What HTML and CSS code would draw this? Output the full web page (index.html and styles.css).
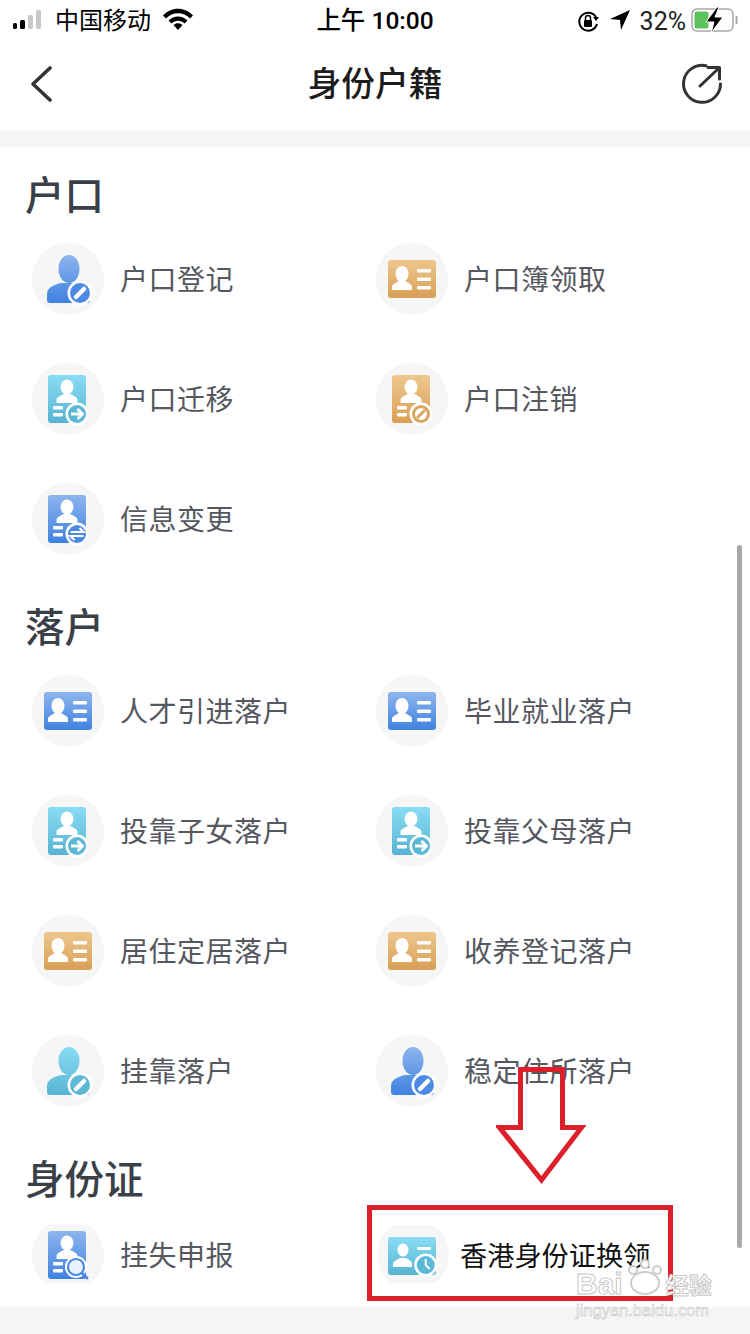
FILE: index.html
```html
<!DOCTYPE html>
<html lang="zh-CN">
<head>
    <meta charset="UTF-8">
    <meta name="viewport" content="width=device-width, initial-scale=1.0">
    <title>身份户籍</title>
    <link rel="stylesheet" href="styles.css">
</head>
<body>
    <svg class="defs" aria-hidden="true">
        <defs>
            <linearGradient id="blue" x1="0" y1="0" x2="0" y2="1"><stop offset="0" stop-color="#8db5ee"/><stop offset="1" stop-color="#3f82e0"/></linearGradient>
            <linearGradient id="teal" x1="0" y1="0" x2="0" y2="1"><stop offset="0" stop-color="#8adcf4"/><stop offset="1" stop-color="#56b4d2"/></linearGradient>
            <linearGradient id="gold" x1="0" y1="0" x2="0" y2="1"><stop offset="0" stop-color="#eec78f"/><stop offset="1" stop-color="#d9a055"/></linearGradient>

            <path id="person" d="M26.500 26a10.500 14 0 1 1 21 0 10.500 14 0 1 1-21 0zM15 57v-6c0-6 6-9 14-11h16c8 2 13 5 13 11v6a3 3 0 0 1-3 3H18a3 3 0 0 1-3-3z"/>
            <g id="doc">
                <rect x="16" y="12" width="38" height="48" rx="3"/>
                <ellipse cx="35" cy="24" rx="6.500" ry="7.500" fill="#fff"/>
                <path fill="#fff" d="M24.500 40v-3c0-3 4-4 7-6h7c3 2 7 3 7 6v3z"/>
                <rect x="21" y="43" width="10" height="3.500" rx="1" fill="#fff"/>
                <rect x="21" y="50" width="10" height="3.500" rx="1" fill="#fff"/>
            </g>
            <g id="card">
                <rect x="12" y="17" width="48" height="38" rx="3"/>
                <ellipse cx="26" cy="31" rx="6.500" ry="8" fill="#fff"/>
                <path fill="#fff" d="M16 47v-3c0-3 4-4 7-6h6c3 2 7 3 7 6v3z"/>
                <rect x="41" y="26" width="14" height="3.500" rx="1" fill="#fff"/>
                <rect x="41" y="34.500" width="14" height="3.500" rx="1" fill="#fff"/>
                <rect x="41" y="43" width="14" height="3.500" rx="1" fill="#fff"/>
            </g>
            <g id="pen">
                <circle cx="48" cy="50" r="12.500" fill="#fff"/>
                <circle cx="48" cy="50" r="10" fill="currentColor"/>
                <path d="M44 54l8-8" stroke="#fff" stroke-width="4.500" stroke-linecap="round" fill="none"/>
            </g>
            <g id="go">
                <circle cx="45" cy="51" r="11.500" fill="#fff"/>
                <circle cx="45" cy="51" r="9" fill="currentColor"/>
                <path d="M39 51h11M45.500 46l5 5-5 5" stroke="#fff" stroke-width="2.800" fill="none"/>
            </g>
            <g id="swap">
                <circle cx="45" cy="51" r="11.500" fill="#fff"/>
                <circle cx="45" cy="51" r="9" fill="currentColor"/>
                <path d="M38.500 49h13l-4-4M51.500 53h-13l4 4" stroke="#fff" stroke-width="2.200" fill="none"/>
            </g>
            <g id="ban">
                <circle cx="45" cy="51" r="11.500" fill="#fff"/>
                <circle cx="45" cy="51" r="9" fill="currentColor"/>
                <circle cx="45" cy="51" r="6" fill="#fff"/>
                <path d="M41 55l8-8" stroke="currentColor" stroke-width="3"/>
            </g>
            <g id="find">
                <circle cx="44" cy="48" r="11" fill="#fff"/>
                <circle cx="44" cy="48" r="8" fill="#eaf3fd" stroke="currentColor" stroke-width="2.200"/>
                <path d="M50 54l5 5" stroke="currentColor" stroke-width="3" stroke-linecap="round"/>
            </g>
            <g id="clock">
                <circle cx="48.700" cy="46" r="11.500" fill="#fff"/>
                <circle cx="48.700" cy="46" r="9" fill="currentColor"/>
                <path d="M48.700 40v6l4 4" stroke="#fff" stroke-width="2" fill="none"/>
            </g>
        </defs>
    </svg>

    <div class="statusbar">
        <div class="status-left">
            <svg class="signal" width="32" height="22" viewBox="0 0 32 22">
                <rect x="1" y="14" width="4" height="6" rx="1.500" fill="#000"/>
                <rect x="8" y="11" width="5" height="9" rx="1.500" fill="#000"/>
                <rect x="16" y="6" width="5" height="14" rx="1.500" fill="#c8c8c8"/>
                <rect x="24" y="1" width="5" height="19" rx="1.500" fill="#c8c8c8"/>
            </svg>
            <span class="carrier">中国移动</span>
            <svg class="wifi" width="32" height="24" viewBox="0 0 32 24">
                <path d="M1 8.500C9-.5 23-.5 31 8.500l-3 3C21.500 4.500 10.500 4.500 4 11.500z" fill="#000"/>
                <path d="M6.500 13.500c5.500-5.500 13.500-5.500 19 0l-3 3c-4-3.800-9-3.800-13 0z" fill="#000"/>
                <path d="M11.500 18c2.500-2.200 6.500-2.200 9 0L16 23z" fill="#000"/>
            </svg>
        </div>
        <div class="status-time">上午 10:00</div>
        <div class="status-right">
            <svg class="lock" width="24" height="24" viewBox="0 0 24 24">
                <path d="M20 8a9 9 0 1 0 1 7" stroke="#000" stroke-width="2" fill="none"/>
                <path d="M17 8h6l-3 4z" fill="#000"/>
                <rect x="8" y="11" width="8" height="7" rx="1" fill="#000"/>
                <path d="M9.500 11V9a2.500 2.500 0 0 1 5 0v2" stroke="#000" stroke-width="1.500" fill="none"/>
            </svg>
            <svg class="locate" width="22" height="22" viewBox="0 0 22 22"><path d="M21 1L1 10l10 1 1 10z" fill="#000"/></svg>
            <span class="percent">32%</span>
            <svg class="battery" width="48" height="26" viewBox="0 0 48 26">
                <rect x="2" y="2" width="41" height="22" rx="5" fill="none" stroke="#a8a8a8" stroke-width="1.500"/>
                <rect x="4.500" y="4.500" width="14" height="17" rx="2.500" fill="#5cc25e"/>
                <path d="M46.500 9v8" stroke="#a8a8a8" stroke-width="2"/>
                <path d="M27 0L16 15h8l-3 11 12-16h-8l4-10z" fill="#000" stroke="#fff" stroke-width="1"/>
            </svg>
        </div>
    </div>

    <div class="navbar">
        <div class="nav-side">
            <svg width="30" height="40" viewBox="0 0 30 40">
                <path d="M24 4L7 20l17 16" stroke="#333" stroke-width="3.600" stroke-linecap="round" stroke-linejoin="round" fill="none"/>
            </svg>
        </div>
        <h1 class="nav-title">身份户籍</h1>
        <div class="nav-side nav-side-right">
            <svg width="44" height="44" viewBox="0 0 44 44">
                <path d="M26 3.800A18.500 18.500 0 1 0 40.500 22" stroke="#333" stroke-width="3" fill="none" stroke-linecap="round"/>
                <path d="M20 24L39 6M28 5.500h11.500V17" stroke="#333" stroke-width="3" fill="none" stroke-linecap="round" stroke-linejoin="round"/>
            </svg>
        </div>
    </div>

    <div class="band"></div>

    <section class="group">
        <h2 class="group-title">户口</h2>
        <div class="grid">
            <div class="item"><svg class="ico c-blue" viewBox="0 0 72 72"><use href="#person" fill="url(#blue)"/><use href="#pen"/></svg><span>户口登记</span></div>
            <div class="item"><svg class="ico" viewBox="0 0 72 72"><use href="#card" fill="url(#gold)"/></svg><span>户口簿领取</span></div>
            <div class="item"><svg class="ico c-teal" viewBox="0 0 72 72"><use href="#doc" fill="url(#teal)"/><use href="#go"/></svg><span>户口迁移</span></div>
            <div class="item"><svg class="ico c-gold" viewBox="0 0 72 72"><use href="#doc" fill="url(#gold)"/><use href="#ban"/></svg><span>户口注销</span></div>
            <div class="item"><svg class="ico c-blue" viewBox="0 0 72 72"><use href="#doc" fill="url(#blue)"/><use href="#swap"/></svg><span>信息变更</span></div>
        </div>
    </section>

    <section class="group">
        <h2 class="group-title">落户</h2>
        <div class="grid">
            <div class="item"><svg class="ico" viewBox="0 0 72 72"><use href="#card" fill="url(#blue)"/></svg><span>人才引进落户</span></div>
            <div class="item"><svg class="ico" viewBox="0 0 72 72"><use href="#card" fill="url(#blue)"/></svg><span>毕业就业落户</span></div>
            <div class="item"><svg class="ico c-teal" viewBox="0 0 72 72"><use href="#doc" fill="url(#teal)"/><use href="#go"/></svg><span>投靠子女落户</span></div>
            <div class="item"><svg class="ico c-teal" viewBox="0 0 72 72"><use href="#doc" fill="url(#teal)"/><use href="#go"/></svg><span>投靠父母落户</span></div>
            <div class="item"><svg class="ico" viewBox="0 0 72 72"><use href="#card" fill="url(#gold)"/></svg><span>居住定居落户</span></div>
            <div class="item"><svg class="ico" viewBox="0 0 72 72"><use href="#card" fill="url(#gold)"/></svg><span>收养登记落户</span></div>
            <div class="item"><svg class="ico c-teal" viewBox="0 0 72 72"><use href="#person" fill="url(#teal)"/><use href="#pen"/></svg><span>挂靠落户</span></div>
            <div class="item"><svg class="ico c-blue" viewBox="0 0 72 72"><use href="#person" fill="url(#blue)"/><use href="#pen"/></svg><span>稳定住所落户</span></div>
        </div>
    </section>

    <section class="group">
        <h2 class="group-title">身份证</h2>
        <div class="grid grid-short">
            <div class="item"><svg class="ico c-blue" viewBox="0 0 72 72"><use href="#doc" fill="url(#blue)"/><use href="#find"/></svg><span>挂失申报</span></div>
            <div class="item item-picked"><svg class="ico c-teal" viewBox="0 0 72 72"><rect x="11" y="18" width="48" height="38" rx="3" fill="url(#teal)"/><ellipse cx="26" cy="31" rx="5.500" ry="6.500" fill="#fff"/><path fill="#fff" d="M16 48v-3c0-3 4-4 7-6h6c3 2 6 3 6 6v3z"/><rect x="40" y="28" width="14" height="3" rx="1" fill="#fff"/><use href="#clock"/></svg><span>香港身份证换领</span></div>
        </div>
    </section>

    <div class="band band-bottom"></div>

    <div class="scrollbar"></div>

    <svg class="arrow" width="100" height="130" viewBox="0 0 100 130">
        <path d="M24.500 3.500h42v58h19L45.500 114 3.500 61.500h21z" fill="none" stroke="#dc1f2a" stroke-width="5"/>
    </svg>
    <div class="redbox"></div>

    <div class="watermark">
        <div class="wm-top"><span>Bai</span><svg class="wm-paw" width="40" height="40" viewBox="0 0 40 40"><ellipse cx="20" cy="27" rx="14" ry="11" fill="#fff" stroke="#ccc" stroke-width="2"/><circle cx="8" cy="14" r="4" fill="#fff" stroke="#ccc" stroke-width="2"/><circle cx="20" cy="8" r="4" fill="#fff" stroke="#ccc" stroke-width="2"/><circle cx="32" cy="14" r="4" fill="#fff" stroke="#ccc" stroke-width="2"/></svg><span class="wm-cn">经验</span></div>
        <div class="wm-url">jingyan.baidu.com</div>
    </div>
</body>
</html>
```

FILE: styles.css
```css
html, body {
    margin: 0;
    padding: 0;
}

body {
    position: relative;
    width: 750px;
    height: 1334px;
    overflow: hidden;
    background-color: #fff;
    font-family: "Liberation Sans", "Noto Sans CJK SC", sans-serif;
}

.defs {
    position: absolute;
    width: 0;
    height: 0;
}

.statusbar {
    display: flex;
    justify-content: space-between;
    align-items: center;
    height: 40px;
    padding: 0 12px;
    color: #000;
    font-size: 24px;
}

.status-left,
.status-right {
    display: flex;
    align-items: center;
    width: 240px;
}

.status-right {
    justify-content: flex-end;
}

.carrier {
    margin-left: 11px;
    margin-right: 11px;
    padding-bottom: 3px;
}

.wifi {
    margin-top: -2px;
}

.status-time {
    padding-bottom: 3px;
    font-family: Roboto, "Noto Sans CJK SC", sans-serif;
    font-size: 24.5px;
    font-weight: 500;
}

.lock {
    margin-top: 2px;
    margin-right: 1px;
}

.locate {
    margin-left: 8px;
}

.percent {
    margin-left: 9px;
    margin-right: 4px;
    padding-top: 2px;
    font-family: Roboto, sans-serif;
    font-size: 25px;
    color: #222;
}

.navbar {
    box-sizing: border-box;
    display: flex;
    justify-content: space-between;
    align-items: center;
    height: 91px;
    padding: 0 26px 3px;
}

.nav-side {
    display: flex;
    width: 100px;
}

.nav-side-right {
    justify-content: flex-end;
}

.nav-title {
    margin: 0;
    padding-bottom: 5px;
    font-family: "Noto Sans CJK SC", sans-serif;
    font-size: 33.8px;
    font-weight: 500;
    color: #1c1c1c;
}

.band {
    height: 16px;
    background-color: #f4f5f7;
}

.band-bottom {
    height: 27px;
}

.group {
    padding-top: 24px;
}

.group-title {
    margin: 0;
    padding-left: 25px;
    height: 48px;
    line-height: 43px;
    font-family: "Noto Sans CJK SC", sans-serif;
    font-size: 39.5px;
    font-weight: 500;
    color: #3b3f47;
}

.grid {
    display: grid;
    grid-template-columns: 344px 344px;
    grid-auto-rows: 120px;
    padding-left: 32px;
}

.grid-short {
    grid-auto-rows: 104px;
}

.item {
    display: flex;
    align-items: center;
    gap: 16px;
    font-family: "Noto Sans CJK SC", sans-serif;
    font-size: 28px;
    letter-spacing: 0.5px;
    color: #55585e;
}

.item span {
    padding-bottom: 2px;
}

.item-picked {
    gap: 11px;
    margin-left: 1px;
    font-size: 27.2px;
    letter-spacing: 0;
    color: #111;
}

.ico {
    width: 72px;
    height: 72px;
    flex: none;
    border-radius: 50%;
    background-color: #f6f6f7;
}

.grid-short .ico {
    clip-path: inset(6px 0 8px 0);
}

.c-blue { color: #4c8ae3; }
.c-teal { color: #5bb8d6; }
.c-gold { color: #d9a660; }

.scrollbar {
    position: absolute;
    left: 737px;
    top: 545px;
    width: 5px;
    height: 703px;
    border-radius: 3px;
    background-color: #a9a9a9;
}

.arrow {
    position: absolute;
    left: 496px;
    top: 1066px;
}

.redbox {
    position: absolute;
    left: 367px;
    top: 1205px;
    width: 296px;
    height: 86px;
    border: 5px solid #dc1f2a;
}

.watermark {
    position: absolute;
    left: 576px;
    top: 1272px;
    width: 136px;
    color: #fff;
    -webkit-text-stroke: 1px #c9c9c9;
}

.wm-top {
    display: flex;
    align-items: center;
    height: 24px;
    font-family: "Liberation Sans", sans-serif;
    font-size: 30px;
    line-height: 24px;
    font-weight: 700;
}

.wm-paw {
    margin: -16px 1px 0 2px;
}

.wm-cn {
    font-family: "Noto Sans CJK SC", sans-serif;
    font-size: 23px;
}

.wm-url {
    margin-top: 5px;
    font-size: 16.5px;
    line-height: 18px;
    -webkit-text-stroke: 0.5px #bbb;
}
```
